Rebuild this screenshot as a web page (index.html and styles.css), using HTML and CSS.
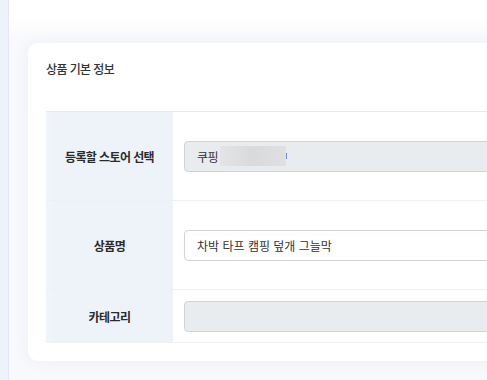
FILE: index.html
```html
<!DOCTYPE html>
<html lang="ko">
<head>
  <meta charset="UTF-8" />
  <meta name="viewport" content="width=device-width, initial-scale=1.0" />
  <title>상품 등록</title>
  <link rel="stylesheet" href="styles.css">
</head>
<body>
  <div class="layout">
    <aside class="sidebar"></aside>

    <main class="content">
      <section class="card">
        <h2 class="card-title">상품 기본 정보</h2>

        <div class="form-table">
          <div class="form-row tall">
            <div class="form-label">등록할 스토어 선택</div>
            <div class="form-field">
              <div class="input disabled">쿠핑<span class="masked"></span><span class="caret"></span></div>
            </div>
          </div>

          <div class="form-row tall">
            <div class="form-label">상품명</div>
            <div class="form-field">
              <input type="text" class="input" value="차박 타프 캠핑 덮개 그늘막">
            </div>
          </div>

          <div class="form-row">
            <div class="form-label">카테고리</div>
            <div class="form-field">
              <div class="input disabled"></div>
            </div>
          </div>
        </div>
      </section>
    </main>
  </div>
</body>
</html>
```

FILE: styles.css
```css
html, body {
  margin: 0;
  padding: 0;
  height: 100%;
  overflow: hidden;
}
body {
  font-family: "Noto Sans CJK KR", "Noto Sans", sans-serif;
  color: #333;
  font-size: 12px;
  letter-spacing: -0.6px;
}
.layout {
  display: flex;
  height: 100%;
}
.sidebar {
  width: 8px;
  flex: 0 0 8px;
  background: #eef2fb;
  border-right: 1px solid #e3e8f4;
}
.content {
  flex: 1;
  padding: 43px 0 0 19px;
  background: linear-gradient(#fff 16px, #f8f9fc 42px);
}
.card {
  width: 620px;
  background: #fff;
  border-radius: 10px;
  padding: 18px 0 18px 18px;
  box-shadow: 0 0 14px rgba(220, 226, 240, 0.45);
}
.card-title {
  margin: 0 0 34px;
  font-size: 12px;
  font-weight: 500;
  line-height: 16px;
  color: #333;
}
.form-table {
  border-top: 1px solid #e8ecf1;
  border-bottom: 1px solid #edf0f4;
}
.form-row {
  display: flex;
  min-height: 52px;
  border-top: 1px solid #edf0f4;
}
.form-row:first-child {
  border-top: none;
}
.form-row.tall {
  min-height: 88px;
}
.form-label {
  width: 127px;
  flex: 0 0 127px;
  background: #eef3fa;
  border-left: 6px solid #f0f4fb;
  box-sizing: border-box;
  display: flex;
  align-items: center;
  justify-content: center;
  font-weight: 700;
  color: #2b2b2b;
  padding-right: 6px;
}
.form-field {
  flex: 1;
  display: flex;
  align-items: center;
  padding: 0 11px;
}
.input {
  width: 100%;
  height: 31px;
  box-sizing: border-box;
  border: 1px solid #ced4da;
  border-radius: 4px;
  background: #fff;
  padding: 0 12px;
  font: inherit;
  color: #333;
  display: flex;
  align-items: center;
  outline: none;
}
.input.disabled {
  background: #e9ecef;
}
.masked {
  display: inline-block;
  width: 66px;
  height: 20px;
  margin-left: 2px;
  background: linear-gradient(90deg, #e3e4e6, #d9dadc 50%, #dfe0e2);
}
.caret {
  display: inline-block;
  width: 1px;
  height: 6px;
  background: #6f8fc8;
}
```
